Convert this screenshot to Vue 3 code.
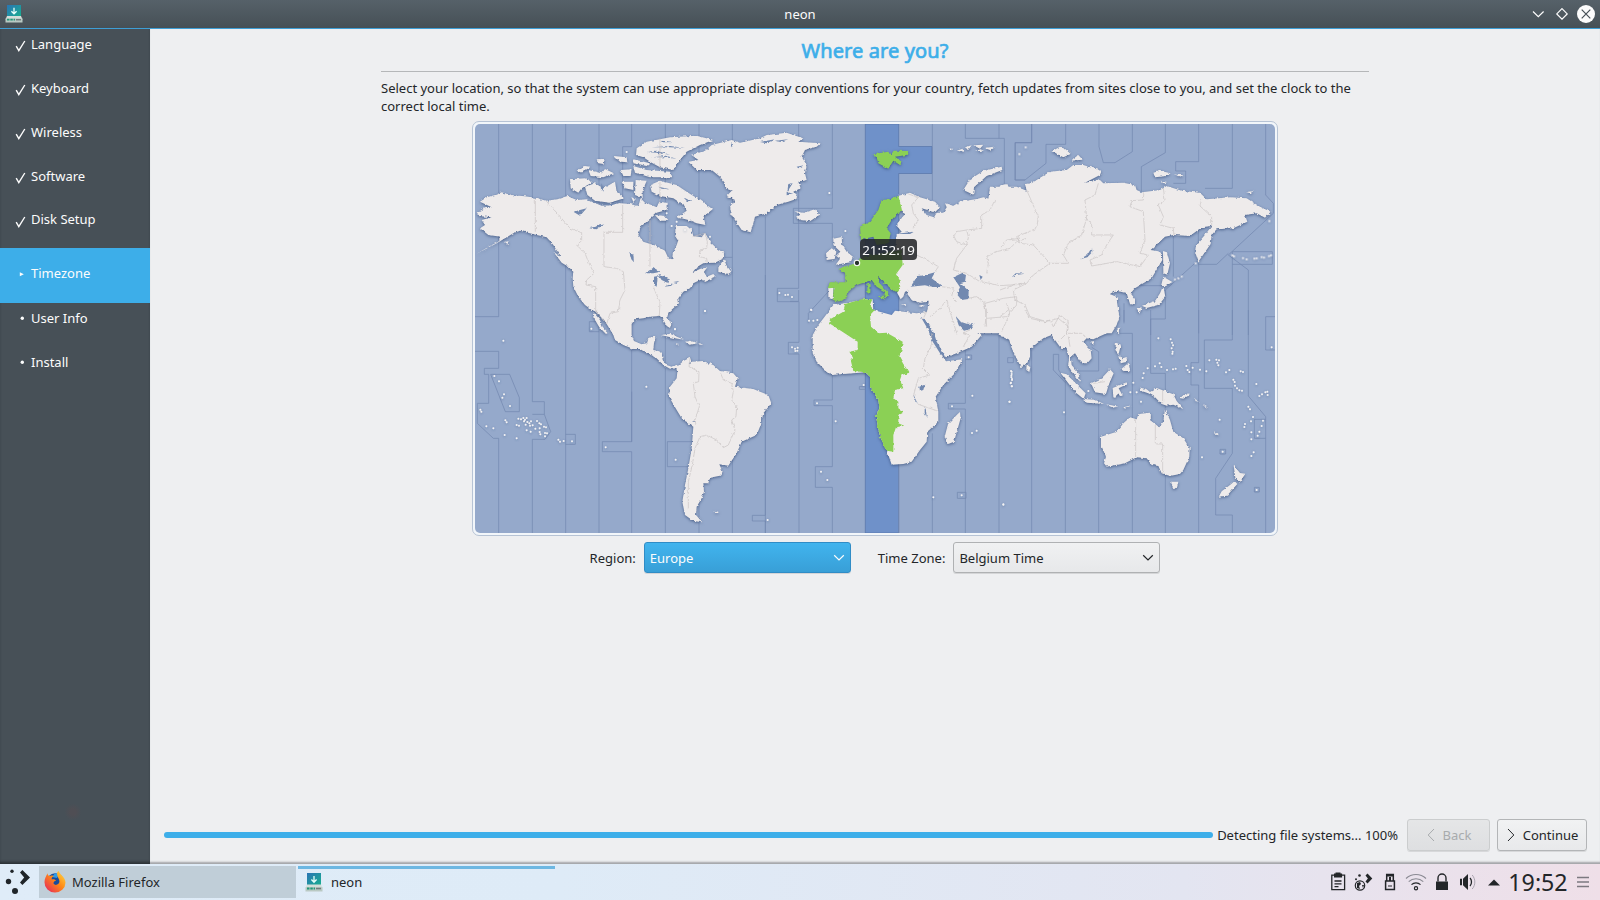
<script setup>
const steps = [
  { label: 'Language', state: 'done' },
  { label: 'Keyboard', state: 'done' },
  { label: 'Wireless', state: 'done' },
  { label: 'Software', state: 'done' },
  { label: 'Disk Setup', state: 'done last' },
  { label: 'Timezone', state: 'active' },
  { label: 'User Info', state: 'todo' },
  { label: 'Install', state: 'todo' },
]

const dots = (list) => list.map(([x, y]) => `M${x} ${y}h.1`).join('')

// Each tile of the map has its own origin; units are a third of a pixel.
const tiles = {
  namerica: 'translate(470 120) scale(.33333)',
  atlantic: 'translate(660 120) scale(.33333)',
  europe: 'translate(810 120) scale(.33333)',
  asia: 'translate(1000 120) scale(.33333)',
  samerica: 'translate(470 325) scale(.33333)',
  africa: 'translate(790 290) scale(.33333)',
  oceania: 'translate(1000 310) scale(.33333)',
}

const zones = [
  [tiles.namerica, 'M86 12V590H15M187 12V845M287 12V1240M387 12V1240M485 12V80H458V250M586 12V1240M687 12V1240M787 12V1240M765 412H787M387 605H358V635H387M485 600V965H397V995H485V1240'],
  [tiles.samerica, 'M15 79H86V130H43V148H56V235H22V295L70 340H86V625M62 148H119L148 218V260H106ZM187 230H223V268H187M223 268L242 320L225 343H187V625M287 328H316V358H287M670 350H592V425H658M886 -150V571H847V588H886V625M987 -70V52H955V87H987V625M485 200V350'],
  [tiles.atlantic, 'M316 290V1240M416 12V505H352V545H416M517 12V265H400V310H517V355M505 515L445 580V608'],
  [tiles.europe, 'M367 12V240M466 12V55H583V190L550 235M567 12V55M616 180V68H665V12M616 180H645'],
  [tiles.asia, 'M45 180V68H95V12M45 180H75L138 130V73H197V12M297 12V80L310 128H345L397 95V12M496 12V98L424 140V215M596 12V125H527V153H557V190H520M697 12V205H615M797 12V225L820 250V280L685 405L745 450V645M595 330V433H650L685 400M520 345V470M590 425L496 510V597H452V645M697 395H817V433H697M697 395V645M596 433V640M825 590H797V690H825M372 550V610M496 497H420'],
  [tiles.oceania, 'M745 0V258L797 320V670M697 0V90H613V235H697V430L647 505V615H697V670M596 0V158H573V225H596V670M452 0V190H496V310M496 490V670M372 0V35M360 70H397V670M296 183V125L275 112M215 183H296M296 270V670M196 215V670M95 120V670M160 133H176V180L200 215M160 133V180L196 218M797 328H763V385H797M660 418H677V432H660ZM763 532H778V546H763ZM23 143H40V158H23Z'],
  [tiles.africa, 'M127 250V330H72V347H127V530H76V592H127V730M326 515V730M427 430V730M526 180V340H475V357H526V730M627 120V730M502 607H528V625H502ZM526 195H545V208H526M226 290H208V298H226M26 0V34H0'],
]

const land = [
  [tiles.namerica, 'M30 245L50 232 75 225 95 217 130 226 165 229 200 234 228 242 262 238 292 228 320 240 350 238 375 250 415 256 435 248 480 252 505 258 512 235 525 248 545 255 560 262 568 245 590 248 590 270 560 278 550 288 530 305 512 320 505 345 520 365 560 378 585 392 595 415 607 418 608 400 620 375 625 360 615 345 617 318 650 318 665 330 670 348 695 352 705 338 720 365 740 385 762 400 762 415 735 428 700 430 680 442 668 457 690 447 712 442 702 455 710 470 730 462 737 470 702 486 695 478 670 490 660 505 640 515 625 535 627 550 610 565 595 578 592 592 604 612 600 624 590 618 580 600 570 588 540 590 520 595 495 598 485 612 485 645 492 663 515 673 530 670 535 653 557 650 552 670 550 690 575 695 578 720 590 735 605 740 618 732 630 745 600 746 580 735 565 720 555 710 530 700 510 687 490 687 460 675 435 660 430 645 410 612 390 588 375 574 365 570 345 555 325 530 310 500 308 475 310 455 285 430 265 400 250 375 230 352 200 345 150 332 130 340 110 352 80 370 20 401 60 378 85 365 92 350 55 345 30 325 45 315 35 300 65 292 25 288 20 278 45 265 65 262ZM370 576L390 600 398 620 415 638 408 642 388 622 375 600ZM500 85L530 65 600 52 680 47 730 60 690 75 650 95 630 120 610 150 570 142 545 128 520 112 498 105ZM490 138L530 150 600 155 606 172 540 172 495 158ZM540 195L570 182 620 195 650 215 690 240 728 268 700 290 706 315 680 310 655 300 622 292 650 272 640 255 610 235 570 228 545 215ZM345 200L375 190 400 205 435 185 440 215 462 235 420 248 375 242 352 225ZM300 178L345 175 368 187 335 205 325 218 302 205ZM355 150L395 160 405 147 432 160 400 172 362 168ZM320 152L345 138 362 140 335 158ZM455 185L490 185 490 210 465 205ZM497 180L530 182 518 212 518 235 495 225ZM432 108L470 112 472 127 450 125ZM452 150L485 148 482 168 460 168ZM380 118L405 116 400 132 385 130ZM490 118L540 130 530 138 490 130ZM555 285L585 288 597 302 570 302ZM745 442L762 418 770 437 784 455 775 462 745 456ZM250 395L285 420 318 443 315 452 275 428ZM105 366L120 362 112 372ZM484 232L498 236 490 246ZM620 285L640 290 630 296Z'],
  [tiles.atlantic, 'M85 125L115 120 95 105 135 92 155 75 215 60 240 68 300 55 320 45 380 38 430 55 415 65 482 70 470 80 435 90 425 110 440 135 435 160 440 180 415 185 422 205 400 215 415 235 385 245 350 255 320 280 285 290 280 310 272 337 245 330 235 315 215 285 210 260 225 240 200 228 215 212 195 205 195 190 180 170 155 150 110 150ZM408 290L420 283 403 273 430 278 465 268 478 285 450 304 420 300ZM520 356L545 351 547 375 560 395 579 410 572 427 527 434 540 416 528 407 541 395 520 375ZM498 400L515 385 529 395 524 417 500 420Z'],
  [tiles.europe, 'M263 228L300 218 330 232 375 245 390 262 375 277 335 265 350 285 372 292 380 278 400 278 410 262 405 250 430 257 450 245 500 237 520 232 555 240 560 215 572 195 592 192 605 222 598 245 580 262 600 270 612 255 605 210 622 205 640 228 665 210 650 198 720 160 780 200V645H585L560 632 520 625 495 640 430 660 380 645 350 610 350 588 356 545 330 548 305 540 292 522 300 500 310 508 285 515 280 530 272 538 262 520 255 480 250 440 260 345 275 335 258 315 285 282 270 270ZM575 140L520 153 480 178 460 210 490 224 492 202 530 168 577 150ZM55 500L71 503 68 538 55 534ZM418 86L430 86 425 91ZM440 92L458 86 460 95ZM465 82L485 76 475 90ZM490 76L520 74 510 86ZM495 93L512 88 522 93ZM525 84L552 80 540 90ZM272 552L290 552 285 556ZM325 558L345 552 335 561Z'],
  [tiles.asia, 'M-30 200L50 200 80 212 75 192 95 190 125 170 150 155 200 150 220 135 250 135 305 152 300 165 255 188 300 180 310 190 370 188 405 195 410 210 425 217 480 210 500 198 545 212 600 218 620 238 690 232 740 235 780 260 812 275 795 293 770 280 735 285 742 305 700 325 650 328 635 345 632 372 595 425 585 395 588 375 610 350 622 335 635 318 605 322 570 348 520 345 495 350 452 390 485 395 487 420 455 475 430 490 405 505 392 520 405 537 405 555 390 552 380 520 362 515 345 512 330 522 358 535 340 548 352 562 358 590 350 615 335 640H-90ZM483 498L490 470 517 486 497 499ZM487 503L491 503 496 530 477 554 440 564 426 557 465 543 480 520ZM410 564L425 562 419 581ZM489 393L501 397 510 430 502 464 490 460ZM157 93L180 80 197 88 212 102 190 112 175 104ZM212 122L235 105 248 119ZM460 158L480 152 512 160 500 168 465 172ZM520 163L550 166 545 170ZM482 182L502 186 490 190ZM738 216L762 213 750 220ZM350 632L358 622 355 645Z'],
  [tiles.samerica, 'M618 128L640 108 660 98 665 110 700 108 730 120 750 138 790 145 803 160 795 185 850 192 895 210 904 235 880 265 872 300 860 330 815 350 800 385 775 422 748 418 758 440 750 452 720 458 715 475 700 475 702 500 695 520 680 545 678 570 697 592 670 588 645 570 637 530 645 480 655 430 665 370 670 305 635 280 620 255 597 215 600 185 620 160 622 140ZM572 30L600 26 642 44 615 40ZM645 50L660 47 683 54 660 60ZM616 55L628 57 620 60ZM685 55L697 56 690 60ZM730 560L742 556 750 560 738 565Z'],
  [tiles.africa, 'M130 45L165 40 225 27 248 28 250 60 305 75 315 62 380 70 410 66 440 0H720V200L712 218 695 232 682 205 660 150 640 140 650 130 625 117 595 115 555 112 538 102 545 118 575 135 545 170 500 190 468 202 455 195 468 214 517 208 495 250 460 285 437 320 445 365 445 395 412 425 410 455 390 480 365 515 340 522 305 524 290 480 270 440 258 380 268 355 265 330 240 290 240 260 225 247 190 250 125 255 105 240 80 215 68 190 68 135 85 105 110 72ZM503 372L510 366 512 385 492 455 475 462 464 440 474 402Z'],
  [tiles.oceania, 'M-20 50L5 80 25 80 35 115 62 170 78 160 80 125 130 85 155 75 165 90 185 118 200 113 207 150 204 165 218 190 240 215 236 190 215 165 212 140 225 130 245 160 262 160 275 145 272 120 250 95 260 85 280 88 320 70 345 50 358 20 350 -30H-20ZM80 163L91 172 88 186 79 180ZM303 380L350 365 370 340 390 322 410 328 415 312 450 308 456 320 450 330 478 352 490 335 495 298 510 330 520 365 550 385 569 415 568 440 550 480 540 492 510 498 485 490 475 468 455 465 440 445 410 442 375 460 320 470 312 460 318 440 303 405ZM510 515L535 515 532 530 522 538ZM701 466L720 489 736 491 719 518 706 503ZM704 513L712 522 681 557 656 560 665 544 690 525ZM422 233L440 238 450 246 470 234 520 253 530 273 550 297 520 284 500 287 485 282 465 262 445 250 422 242ZM273 220L305 205 330 178 341 190 326 225 318 252 285 247ZM181 188L200 193 236 229 257 250 251 267 225 246ZM250 267L285 269 312 282 260 278ZM315 283L335 286 355 290 340 293ZM338 234L380 217 380 223 356 235 368 257 360 258 353 248 346 264 340 262ZM348 98L363 104 356 132 346 120ZM363 178L386 158 391 186 374 185ZM358 136L368 148 382 143 379 156 362 160ZM350 68L357 52 355 75ZM270 95L285 93 278 104ZM370 292L395 286 375 296ZM535 263L565 250 565 257 550 266ZM580 262L600 278 590 274ZM605 283L628 295 615 290ZM640 362L658 376 648 374Z'],
]

const green = [
  [tiles.europe, 'M265 228L240 238 215 240 205 270 180 305 150 320 153 360 170 355 190 350 200 375 235 370 242 340 230 325 245 300 262 280 277 275 270 245ZM187 103L235 95 240 103 255 92 295 93 290 105 255 110 275 125 270 135 250 122 235 146 205 130 200 112ZM275 390L150 412 145 430 130 432 105 440 85 447 105 458 107 487 60 487 55 495 57 505 71 503 69 540 85 545 110 535 115 515 140 495 165 487 185 480 200 500 225 515 222 532 230 535 235 518 205 485 205 470 225 490 250 512 264 517 271 495 268 478 258 463 278 435ZM172 491L182 493 181 522 172 519ZM203 529L226 526 225 539Z'],
  [tiles.africa, 'M165 42L215 28 247 28 240 45 252 62 240 75 243 110 265 130 290 128 338 155 335 180 328 200 340 222 358 248 335 255 330 270 340 295 315 300 310 325 325 335 325 355 337 362 337 370 325 375 325 400 343 407 318 412 310 435 310 485 290 482 270 440 258 380 268 355 265 330 240 290 240 260 225 247 190 243 182 210 190 205 178 185 203 180 203 155 118 100 120 88 160 65Z'],
]

const lakes = [
  [tiles.namerica, 'M525 460L550 443 572 455 550 460ZM552 470L563 468 560 500 552 495ZM565 465L600 475 595 490 575 480ZM583 500L608 490 600 498ZM610 486L628 483 620 488ZM478 395L490 405 492 427 484 418ZM358 325L403 312 380 328ZM310 275L350 265 330 287ZM375 249L395 252 420 250 455 246 425 256 395 257ZM545 82L600 78 645 84 600 82ZM530 96L560 92 600 104 560 98ZM545 112L590 108 620 116 585 112ZM575 62L610 66 580 67ZM565 200L600 208 575 206ZM640 232L668 246 650 242ZM395 190L402 215 392 205Z'],
  [tiles.atlantic, 'M385 192L398 190 382 215ZM300 66L345 58 320 70ZM345 62L385 58 360 66ZM380 215L400 222 380 226ZM215 68L217 82 212 78ZM410 140L432 136 415 145Z'],
  [tiles.europe, 'M302 500L322 468 343 466 375 457 365 475 395 498 382 505 345 496ZM430 472L455 460 468 465 465 485 450 490 476 512 475 537 455 540 440 522 450 502ZM255 342L312 335 300 342ZM605 472L617 460 645 461 618 465ZM508 465L518 470 512 480Z'],
  [tiles.asia, 'M240 418L262 404 276 382 277 396 262 412Z'],
  [tiles.africa, 'M392 80L412 95 432 130 440 155 467 200 452 193 425 150 415 120ZM497 78L512 95 532 102 550 100 545 116 522 122 506 106ZM388 290L404 284 400 300 390 303ZM370 310L375 325 384 342 373 328ZM404 350L408 360 410 381 404 370Z'],
  [tiles.samerica, 'M656 114L663 112 662 121ZM670 287L678 290 672 291Z'],
]

const borders = [
  [tiles.namerica, 'M196 236V335M228 242L245 262 262 280 300 325 335 338V362L320 375 345 400 355 425 372 460 350 480 348 495 377 500V575L410 612 420 580 445 575 450 540 465 510 460 455 440 445 402 440V337H458V255M540 300V440M550 500L560 525 570 545 568 588M668 350L705 340 712 365 710 385 690 390 688 410 710 415 712 430M570 55V145M570 185V255'],
  [tiles.europe, 'M295 222L325 232 305 255 310 280 325 300 310 325M270 380L310 400 360 425 385 440 375 455M555 240L540 270 515 285V325L470 330 475 350 470 375 440 365 430 345 440 335 470 330M470 375L440 415 430 450 470 460M470 460L510 485 540 490 570 497 600 495 635 490M530 460L535 430 530 410 560 395 600 385 620 365 650 355M395 500L430 505 425 530 440 545M360 590L390 565 410 540 425 590 440 640M475 535L500 530 525 550 530 620M525 550L580 535 620 530 620 555 590 590 530 595'],
  [tiles.asia, 'M80 210L95 245 115 290 110 325 50 350 60 370 100 375 150 430 205 430 190 405 205 370 245 345 260 295 255 240 285 225 295 190M258 295L275 310 275 345 340 345 320 375 305 405 270 420 275 438 350 425 420 440 445 405 420 400 435 360 430 275 390 260 395 242 430 240 432 215M490 205L495 240 475 255 490 290 480 315 520 325 522 345M605 238L600 258 635 290 635 318M0 385L20 360 60 355M150 430L100 465 80 490 40 510 45 540 75 555 90 590 140 605 175 595 205 620 200 645M0 510L40 495 75 490'],
  [tiles.samerica, 'M660 100L657 125 687 140 686 170 670 175 675 215 688 245 675 285 678 300M752 145L760 165 785 175 790 200 785 225 800 245 798 275 785 285 795 315 775 360 760 368 740 345 710 330 690 335 675 370 667 420 655 470 655 550'],
  [tiles.africa, 'M425 130L425 165 405 205 400 235 420 255 385 265 375 300 370 320M383 342L405 350 440 362M410 65L400 85M545 118L520 128 540 135 520 170M580 40L590 60 585 110M650 40L660 70 635 125'],
  [tiles.oceania, 'M407 328V442M466 345V402H488V490M488 240V280M0 20L25 0M75 0L90 25 135 35 150 30 160 50 180 15 205 35 200 70 175 95M200 70L245 70 260 85M205 80L210 110M280 220L315 215'],
]

const isles = [
  [tiles.samerica, dots([[73,153],[87,169],[102,208],[97,218],[120,243],[100,47],[31,254],[34,260],[106,286],[110,292],[145,281],[153,283],[160,279],[165,284],[170,279],[162,289],[172,291],[178,295],[183,289],[188,301],[180,302],[167,299],[140,300],[147,302],[196,311],[201,288],[208,295],[213,298],[209,310],[222,305],[228,307],[170,316],[182,320],[209,321],[211,328],[225,324],[231,325],[225,334],[49,304],[70,310],[104,330],[140,340],[265,344],[270,350],[281,348],[306,349],[407,367],[529,185],[364,11],[617,404],[893,585],[966,67],[975,71],[982,77],[983,68],[976,78],[615,13]])],
  [tiles.atlantic, dots([[358,519],[376,525],[384,524],[396,531],[453,569],[447,602],[460,602],[472,600],[135,573],[45,627],[508,219],[556,333]])],
  [tiles.africa, dots([[81,340],[137,394],[93,545],[112,570],[221,285],[547,317],[486,349],[546,429],[560,422],[430,622],[515,616],[640,643],[536,202],[659,335],[663,243],[665,252],[664,262],[666,270],[662,280],[665,289],[64,60]])],
  [tiles.oceania, dots([[35,185],[34,197],[36,207],[33,218],[36,229],[28,275],[192,307],[475,85],[512,88],[516,98],[519,106],[515,115],[518,125],[517,131],[443,175],[465,169],[479,160],[484,171],[501,180],[519,178],[527,176],[559,168],[563,180],[568,186],[578,173],[600,179],[619,184],[628,151],[649,149],[657,151],[652,158],[655,166],[678,187],[688,180],[722,184],[729,186],[700,209],[704,216],[705,227],[711,235],[718,241],[726,242],[769,222],[786,253],[796,247],[802,245],[803,255],[778,258],[745,290],[750,298],[759,321],[753,334],[735,342],[733,351],[754,367],[789,332],[785,348],[778,365],[773,377],[754,388],[761,427],[754,438],[606,442],[668,425],[770,540],[659,329],[815,112],[10,584],[431,190],[428,204],[400,218],[391,247],[265,243],[410,247],[423,275]])],
  [tiles.asia, dots([[697,406],[702,409],[729,414],[740,418],[763,416],[770,415],[785,411],[792,413],[807,408],[813,406],[77,82],[58,102],[545,470],[535,475],[525,479],[587,430],[808,303]])],
  [tiles.namerica, dots([[705,573],[470,96],[590,280],[620,305],[605,318],[645,330],[720,350]])],
]
</script>

<template>
  <div class="desktop">
    <svg class="defs" width="0" height="0">
      <defs>
        <linearGradient id="teal" x1="0" y1="0" x2="1" y2="1"><stop offset="0" stop-color="#2a74b5" /><stop offset="1" stop-color="#18b08f" /></linearGradient>
        <linearGradient id="fox" x1="1" y1="0" x2="0" y2="1"><stop offset="0" stop-color="#ffe14a" /><stop offset=".45" stop-color="#ff8a16" /><stop offset="1" stop-color="#e31b64" /></linearGradient>
        <symbol id="installer" viewBox="0 0 18 18">
          <rect x="2" y="0" width="14" height="12" fill="url(#teal)" />
          <path d="M9 2.8v6M6.4 6.2L9 8.8l2.6-2.6" fill="none" stroke="#e6fffb" stroke-width="1.3" />
          <path d="M2 11h14l1.5 3.5H.5z" fill="#d3ded9" /><rect x=".5" y="13.5" width="17" height="4" fill="#b9c9c3" />
          <path d="M2 14.7h8" stroke="#219778" stroke-width="1.7" stroke-dasharray="2.5 .8" /><path d="M11 14.7h5" stroke="#717b7d" stroke-width="1.5" />
        </symbol>
      </defs>
    </svg>

    <header class="titlebar">
      <svg class="app-icon" width="18" height="18"><use href="#installer" /></svg>
      <span>neon</span>
      <svg class="controls" width="70" height="28" viewBox="0 0 70 28" fill="none" stroke="#fcfcfc" stroke-width="1.2">
        <path d="M3 11.5l5.3 5.2 5.3-5.2M32 8.7l5.2 5.2-5.2 5.2-5.2-5.2z" />
        <circle cx="56" cy="14" r="9" fill="#fcfcfc" stroke="none" />
        <path d="M51.7 9.7l8.6 8.6M60.3 9.7l-8.6 8.6" stroke="#475057" />
      </svg>
    </header>

    <div class="window">
      <nav class="steps">
        <div v-for="s in steps" :key="s.label" class="step" :class="s.state">
          <svg v-if="s.state.startsWith('done')" class="mark" width="12" height="14" viewBox="0 0 12 14"><path d="M1.2 7.2L3.8 11.6 9.8 2" fill="none" stroke="#fcfcfc" stroke-width="1.4" /></svg>
          <svg v-else-if="s.state === 'active'" class="mark" width="12" height="14" viewBox="0 0 12 14"><path d="M4.8 5.3v4l4-2z" fill="#fcfcfc" /></svg>
          <svg v-else class="mark" width="12" height="14" viewBox="0 0 12 14"><circle cx="7.3" cy="7.2" r="1.7" fill="#fcfcfc" /></svg>
          <span>{{ s.label }}</span>
        </div>
        <div class="emblem"></div>
      </nav>

      <main class="page">
        <section class="content">
          <h1>Where are you?</h1>
          <p>Select your location, so that the system can use appropriate display conventions for your country, fetch updates from sites close to you, and set the clock to the<br>correct local time.</p>

          <div class="map-frame">
            <svg class="map" width="800" height="409" viewBox="475 124 800 409">
              <defs>
                <filter id="coast" x="470" y="120" width="810" height="418" filterUnits="userSpaceOnUse" color-interpolation-filters="sRGB">
                  <feTurbulence type="fractalNoise" baseFrequency=".3" numOctaves="2" seed="4" result="n" />
                  <feDisplacementMap in="SourceGraphic" in2="n" scale="3" xChannelSelector="R" yChannelSelector="G" result="l" />
                  <feDropShadow in="l" dx="0" dy="1" stdDeviation="1.8" flood-color="#2d4470" flood-opacity=".7" />
                </filter>
                <filter id="isle" x="470" y="120" width="810" height="418" filterUnits="userSpaceOnUse">
                  <feDropShadow dx="0" dy=".6" stdDeviation=".8" flood-color="#2d4470" flood-opacity=".4" />
                </filter>
              </defs>
              <rect x="475" y="124" width="800" height="409" fill="#95a9cb" />
              <path d="M865.3 124H898.7V146.5H932V173.5H898.7V533H865.3Z" fill="#6f91c9" stroke="#5674a8" stroke-width=".7" />
              <g fill="none" stroke="#7388af" stroke-width="2.2">
                <path v-for="([t, d], i) in zones" :key="i" :transform="t" :d="d" />
              </g>
              <g filter="url(#coast)">
                <g fill="#eeebeb"><path v-for="([t, d], i) in land" :key="i" :transform="t" :d="d" /></g>
                <g fill="#8bd055"><path v-for="([t, d], i) in green" :key="i" :transform="t" :d="d" /></g>
                <g fill="#7289b0"><path v-for="([t, d], i) in lakes" :key="i" :transform="t" :d="d" /></g>
                <g fill="none" stroke="#c6c1c1" stroke-width="1.9"><path v-for="([t, d], i) in borders" :key="i" :transform="t" :d="d" /></g>
              </g>
              <g filter="url(#isle)" fill="none" stroke="#f4f3f4" stroke-width="5.8" stroke-linecap="round">
                <path v-for="([t, d], i) in isles" :key="i" :transform="t" :d="d" />
              </g>
              <circle cx="857" cy="263" r="2.7" fill="#26332b" stroke="#f7f7f7" stroke-width="1.1" />
              <rect x="860" y="239" width="57" height="21" rx="4" fill="#222426" fill-opacity=".86" />
              <text x="888.6" y="254.9" text-anchor="middle" fill="#fcfcfc" font-size="13.3">21:52:19</text>
            </svg>
          </div>

          <div class="selectors">
            <span>Region:</span>
            <div class="combo selected">Europe<svg width="12" height="8" viewBox="0 0 12 8"><path d="M1.2 1.3L6 6l4.8-4.7" fill="none" stroke="currentColor" stroke-width="1.2" /></svg></div>
            <span class="zone-label">Time Zone:</span>
            <div class="combo">Belgium Time<svg width="12" height="8" viewBox="0 0 12 8"><path d="M1.2 1.3L6 6l4.8-4.7" fill="none" stroke="currentColor" stroke-width="1.2" /></svg></div>
          </div>
        </section>

        <footer class="actions">
          <div class="progress"></div>
          <span class="status">Detecting file systems... 100%</span>
          <div class="button disabled"><svg width="8" height="14" viewBox="0 0 8 14"><path d="M7 1L1.2 7 7 13" fill="none" stroke="currentColor" /></svg>Back</div>
          <div class="button"><svg width="8" height="14" viewBox="0 0 8 14"><path d="M1 1l5.8 6L1 13" fill="none" stroke="currentColor" /></svg>Continue</div>
        </footer>
      </main>
    </div>

    <div class="panel">
      <svg class="launcher" width="39" height="36" viewBox="0 0 39 36" fill="#202529">
        <circle cx="12" cy="7.3" r="1.7" /><circle cx="8.5" cy="17.5" r="2.7" /><circle cx="15" cy="27" r="3" />
        <path d="M20 8.5l2.4-2.4 7.6 7.4-7.6 7.4L20 18.5l4.2-5z" />
      </svg>
      <div class="task firefox">
        <svg width="22" height="22" viewBox="0 0 22 22">
          <circle cx="11.3" cy="11.3" r="9" fill="#194b9b" /><path d="M11 2.2c3 0 4 1 4 1L13 7l-5-1z" fill="#2e9be8" />
          <path d="M3.6 2.2C3.6 4 4.4 4.8 6 5c1.7-1 3.6-.4 4 .1-2 .7-2.7 2-2.1 3.4 1.6-.4 3 0 4.2 1.3-1.3-.1-2 .7-2.4 1.5-.8 1.3.8 3 2.9 2.5 2.3-.6 3.5-2.7 2.5-5C14.3 6.6 12.9 5 13 2c.4-1 1-1.5 1.8-2 1 4 6.7 5.8 6.7 11.7A10.5 10 0 0 1 .5 11.3C.4 7.6 2.2 4.8 3.6 2.2z" fill="url(#fox)" />
        </svg>
        <span>Mozilla Firefox</span>
      </div>
      <div class="task neon">
        <svg width="18" height="19" viewBox="0 0 18 18" preserveAspectRatio="none"><use href="#installer" /></svg>
        <span>neon</span>
      </div>
      <svg class="tray" width="180" height="36" viewBox="1325 864 180 36" fill="none" stroke="#232629">
        <path d="M1331.8 875.2h12.8v14.5h-12.8zM1334.5 881h7M1334.5 883.8h7M1334.5 886.6h4" stroke-width="1.3" /><path d="M1334 873.6h1.5v-1h5v1h1.6v3.9h-8.1z" fill="#232629" stroke="none" />
        <circle cx="1360" cy="885.5" r="4.7" stroke-width="1.2" /><path d="M1357 883l3-1 1 2-2 2 1 3-3-1zM1362 885l2 0-1 3z" fill="#232629" stroke="none" />
        <path d="M1365.5 875.5l2-2 4.8 5-4.8 5-2-2 2.4-3z" fill="#232629" stroke="none" /><circle cx="1359.5" cy="875.5" r="1.3" fill="#232629" stroke="none" /><circle cx="1356" cy="879.3" r="1" fill="#232629" stroke="none" />
        <path d="M1386.7 880.5v-6h6.6v6M1385.6 881h8.8v8.5h-8.8z" stroke-width="1.5" /><path d="M1386 874h8v2.5h-8zM1389 877h2v4h-2z" fill="#232629" stroke="none" /><path d="M1388 886h4" />
        <circle cx="1416" cy="888.2" r="1.6" stroke-width="1.2" /><path d="M1411.5 884.6a6.5 6.5 0 0 1 9 0" stroke-width="1.2" /><path d="M1408.7 881.7a10.5 10.5 0 0 1 14.6 0M1406 878.5a14.5 14.5 0 0 1 20 0" stroke="#8a8a93" stroke-width="1.1" />
        <path d="M1436 881.5h12v8.5h-12z" fill="#232629" stroke="none" /><path d="M1438 881.5v-3.5a4 4 0 0 1 8 0v3.5" stroke-width="1.4" />
        <path d="M1460 878.8h2v6.4h-2zM1463 878.8l5-4.8v16l-5-4.8z" fill="#232629" stroke="none" /><path d="M1470 878c2 2 2 6 0 8" stroke-width="1.3" /><path d="M1472.2 875c3.5 4 3.5 10 0 14" stroke="#aaa5b0" />
        <path d="M1488 885.5l6-6 6 6z" fill="#232629" stroke="none" />
      </svg>
      <span class="clock">19:52</span>
      <svg class="menu" width="12" height="12" viewBox="0 0 12 12"><path d="M0 1.5h12M0 6h12M0 10.5h12" stroke="#7c7980" stroke-width="1.5" /></svg>
    </div>
  </div>
</template>

<style>
html, body { margin: 0; overflow: hidden; }
</style>

<style scoped>
.desktop { width: 1600px; height: 900px; display: flex; flex-direction: column; font: 13px/18px "Noto Sans", sans-serif; color: #232629; background: #eeeff1; overflow: hidden; }
.defs { position: absolute; }
.titlebar { box-sizing: border-box; height: 29px; flex: none; display: flex; align-items: center; justify-content: space-between; padding: 0 0 0 5px; background: linear-gradient(#566169, #465056); border-bottom: 1px solid #3e9fd6; color: #fcfcfc; }
.app-icon { margin-right: 47px; }
.controls { flex: none; }
.window { height: 835px; flex: none; display: flex; }
.steps { width: 150px; flex: none; background: #475057; color: #fcfcfc; padding-top: 6px; box-sizing: border-box; box-shadow: inset 0 -3px 3px -1px #2a3035; }
.step { height: 44px; display: flex; align-items: flex-start; }
.step .mark { width: 12px; margin: 4px 4px 0 15px; flex: none; }
.last { height: 37px; }
.last span { margin-top: -1px; }
.active { height: 55px; background: #3daee9; align-items: center; }
.active .mark { margin-top: -3px; }
.active span { margin-top: -6px; }
.todo { padding-top: 6px; height: 38px; }
.todo .mark { margin-top: 2px; }
.emblem { width: 54px; height: 54px; margin: 394px 0 0 46px; border-radius: 50%; background: radial-gradient(circle, #4f4e54 0 8%, transparent 22%); }
.page { flex: 1; display: flex; flex-direction: column; justify-content: space-between; align-items: center; padding: 0 13px 13px 14px; box-shadow: inset 0 -3px 2px -1px #a3a5a8; }
.content { width: 988px; margin-left: -1px; display: flex; flex-direction: column; align-items: center; }
h1 { box-sizing: border-box; width: 100%; height: 43px; margin: 0; padding-top: 8px; border-bottom: 1px solid #b5b7b9; color: #3daee9; font-size: 20px; line-height: 28px; font-weight: 400; -webkit-text-stroke: .7px #3daee9; letter-spacing: .1px; text-align: center; }
p { width: 100%; margin: 7px 0 6px; white-space: nowrap; }
.map-frame { box-sizing: border-box; width: 806px; height: 415px; padding: 2px; border: 1px solid #b6c3d5; border-radius: 7px; background: #f2f6fa; }
.map { display: block; border-radius: 5px; }
.selectors { display: flex; align-items: center; margin-top: 6px; }
.selectors span { margin-right: 8px; }
.selectors .zone-label { margin-left: 27px; }
.combo { box-sizing: border-box; width: 207px; height: 31px; display: flex; align-items: center; justify-content: space-between; padding: 0 5px; border: 1px solid #afb1b3; border-radius: 3px; background: linear-gradient(#f0f1f2, #e7e8ea); box-shadow: 0 1px #d4d5d7; }
.combo.selected { color: #fcfcfc; border-color: #308cc6; background: linear-gradient(#41b4ee, #389fd7); }
.actions { width: 100%; height: 32px; display: flex; align-items: center; }
.progress { flex: 1; height: 6px; border-radius: 3px; background: #3daee9; }
.status { margin: 0 9px 0 4px; white-space: nowrap; }
.button { box-sizing: border-box; width: 90px; height: 32px; display: flex; align-items: center; justify-content: center; gap: 8px; padding-left: 1px; border: 1px solid #b3b5b7; border-radius: 3px; background: linear-gradient(#f1f2f3, #e8e9eb); box-shadow: 0 1px #d7d8da; }
.button.disabled { width: 83px; margin-right: 7px; color: #a8abad; border-color: #cbcdce; background: linear-gradient(#e5e6e7, #dedfe1); }
.panel { height: 36px; flex: none; display: flex; align-items: center; background: linear-gradient(90deg, #dfecf8 0, #deebf7 35%, #e3e5f1 74%, #efdfe8 100%); }
.launcher { flex: none; }
.task { box-sizing: border-box; width: 257px; height: 32px; flex: none; display: flex; align-items: center; }
.firefox { background: #c0ced8; padding-left: 5px; gap: 6px; margin-right: 2px; }
.neon { border-top: 3px solid #6cb7e2; padding-left: 7px; gap: 8px; padding-bottom: 3px; }
.tray { margin-left: auto; flex: none; }
.clock { width: 66px; text-align: center; font-size: 23.2px; line-height: 34px; }
.menu { margin: 0 11px 0 6px; flex: none; }
</style>
